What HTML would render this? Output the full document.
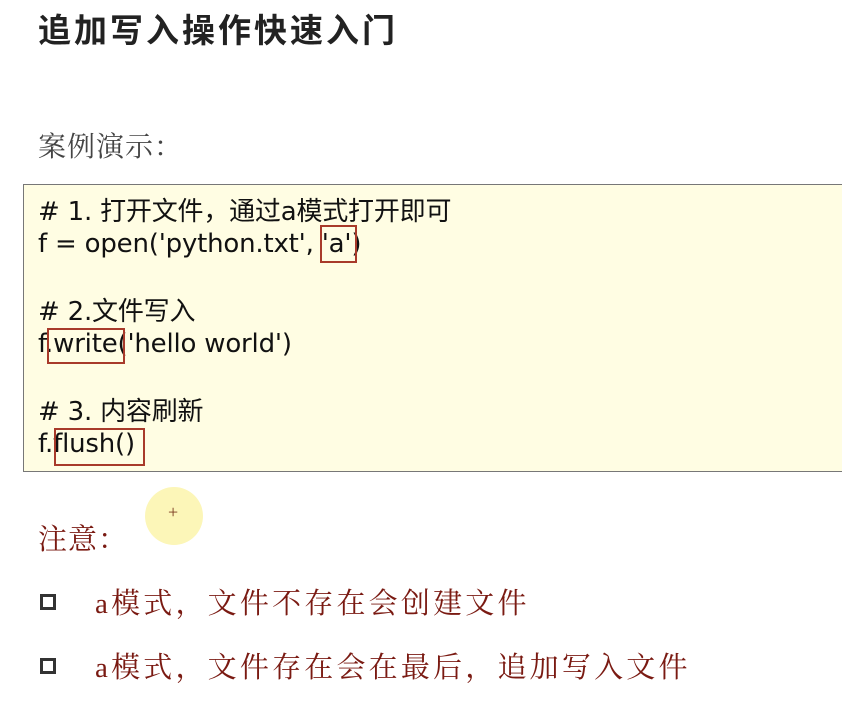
<!DOCTYPE html>
<html><head><meta charset="utf-8"><style>
body{margin:0;width:842px;height:707px;background:#fff;position:relative;overflow:hidden}
.a{position:absolute;white-space:nowrap}
.t{left:38px;top:11px;font:bold 33px/40px "Liberation Sans","Noto Sans CJK SC",sans-serif;letter-spacing:3px;color:#222}
.s{font-family:"Liberation Serif","Noto Serif CJK SC",serif;font-size:29px;line-height:36px;letter-spacing:3.2px}
.box{position:absolute;left:23px;top:184px;width:830px;height:286px;background:#fffde3;border:1px solid #777}
.c{font:26px/32px "DejaVu Sans","Noto Sans CJK SC",sans-serif;color:#111;left:38px;letter-spacing:-0.2px}
.r{position:absolute;border:2px solid #a83a2a}
.cb{position:absolute;left:40px;width:16px;height:16px;border:3px solid #333;box-sizing:border-box}
</style></head><body>
<div class="a t">追加写入操作快速入门</div>
<div class="a s" style="left:38px;top:130px;color:#444;font-size:28px;letter-spacing:1px">案例演示：</div>
<div class="box"></div>
<div class="a c" style="top:196px"># 1. 打开文件，通过a模式打开即可</div>
<div class="a c" style="top:228px">f = open('python.txt', 'a')</div>
<div class="a c" style="top:296px"># 2.文件写入</div>
<div class="a c" style="top:328px">f.write('hello world')</div>
<div class="a c" style="top:396px"># 3. 内容刷新</div>
<div class="a c" style="top:428px">f.flush()</div>
<div class="r" style="left:320px;top:225px;width:33px;height:34px"></div>
<div class="r" style="left:47px;top:328px;width:74px;height:32px"></div>
<div class="r" style="left:54px;top:428px;width:87px;height:34px"></div>
<div style="position:absolute;left:145px;top:487px;width:58px;height:58px;border-radius:50%;background:#fcf6b8"></div>
<div class="a" style="left:168px;top:502px;color:#7a3a20;font-size:18px">+</div>
<div class="a s" style="left:38px;top:522px;color:#7a1a12;letter-spacing:1px">注意：</div>
<div class="cb" style="top:594px"></div>
<div class="a s" style="left:95px;top:586px;color:#7a1a12">a模式，文件不存在会创建文件</div>
<div class="cb" style="top:658px"></div>
<div class="a s" style="left:95px;top:650px;color:#7a1a12">a模式，文件存在会在最后，追加写入文件</div>
</body></html>
